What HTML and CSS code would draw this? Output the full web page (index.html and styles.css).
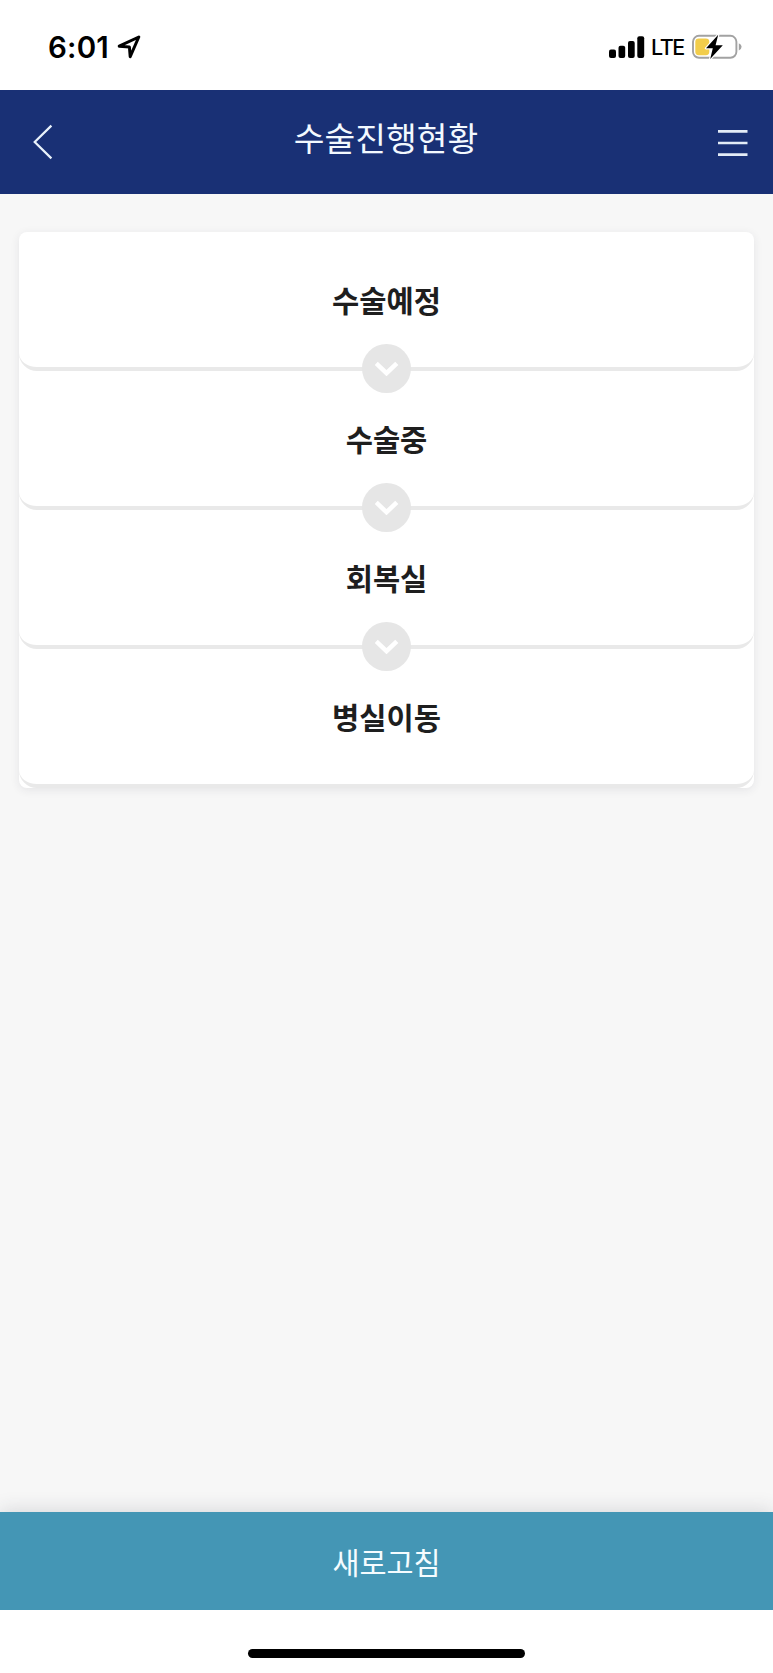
FILE: index.html
```html
<!DOCTYPE html>
<html lang="ko">
<head>
    <meta charset="UTF-8">
    <meta name="viewport" content="width=device-width, initial-scale=1.0">
    <title>수술진행현황</title>
    <link rel="stylesheet" href="styles.css">
</head>
<body>
    <div class="status-bar">
        <div class="status-left">
            <span class="time">6:01</span>
            <svg class="location" width="26" height="26" viewBox="0 0 26 26">
                <path d="M3.2 12.2 L22.8 3 L14.2 22.6 L13.4 13 Z" fill="none" stroke="#000" stroke-width="3" stroke-linejoin="round"/>
            </svg>
        </div>
        <div class="status-right">
            <svg class="signal" width="36" height="22" viewBox="0 0 36 22">
                <rect x="0" y="13.5" width="7" height="8.5" rx="2"/>
                <rect x="9.5" y="9.7" width="6.7" height="12.3" rx="2"/>
                <rect x="19" y="5" width="6.7" height="17" rx="2"/>
                <rect x="28.3" y="0.3" width="6.9" height="21.7" rx="2"/>
            </svg>
            <span class="network">LTE</span>
            <svg class="battery" width="50" height="26" viewBox="0 0 50 26">
                <rect x="1" y="1.8" width="43.4" height="22" rx="6" fill="none" stroke="#a2a2a2" stroke-width="1.9"/>
                <path d="M46.8 9.2 Q49.6 10.2 49.6 12.8 Q49.6 15.4 46.8 16.4 Z" fill="#a2a2a2"/>
                <rect x="3.3" y="4.4" width="14" height="16.8" rx="3.4" fill="#f2cd4b"/>
                <path d="M26.2 0.8 L14 14.2 H20.8 L18.2 25 L30.8 11.2 H23.6 Z" fill="#000" stroke="#fff" stroke-width="2.4" paint-order="stroke" stroke-linejoin="round"/>
            </svg>
        </div>
    </div>

    <header class="header">
        <svg class="back" width="20" height="36" viewBox="0 0 20 36">
            <path d="M18.4 1.6 L1.7 18 L18.4 34.4" fill="none" stroke="#e9f2fb" stroke-width="2.2"/>
        </svg>
        <h1>수술진행현황</h1>
        <svg class="menu" width="30" height="28" viewBox="0 0 30 28">
            <path d="M0 2.4 H29.5 M0 14 H29.5 M0 25.6 H29.5" stroke="#e3ecf7" stroke-width="2.6"/>
        </svg>
    </header>

    <main class="content">
        <ol class="steps">
            <li class="step">
                수술예정
                <span class="arrow"><svg width="24" height="16" viewBox="0 0 24 16"><path d="M1.2 3.4 L11.5 13.2 L21.8 3.4"/></svg></span>
            </li>
            <li class="step">
                수술중
                <span class="arrow"><svg width="24" height="16" viewBox="0 0 24 16"><path d="M1.2 3.4 L11.5 13.2 L21.8 3.4"/></svg></span>
            </li>
            <li class="step">
                회복실
                <span class="arrow"><svg width="24" height="16" viewBox="0 0 24 16"><path d="M1.2 3.4 L11.5 13.2 L21.8 3.4"/></svg></span>
            </li>
            <li class="step">병실이동</li>
        </ol>
    </main>

    <button class="refresh" type="button">새로고침</button>
    <div class="home-area">
        <div class="home-indicator"></div>
    </div>
</body>
</html>
```

FILE: styles.css
```css
* {
    box-sizing: border-box;
}
body {
    display: flex;
    flex-direction: column;
    height: 1673px;
    margin: 0;
    background-color: #f7f7f7;
    font-family: "Noto Sans CJK KR", sans-serif;
    color: #1e1e1e;
}

/* status bar */
.status-bar {
    display: flex;
    justify-content: space-between;
    height: 89.5px;
    padding: 33px 31px 0 48px;
    background-color: #fff;
    color: #000;
    font-family: Inter, sans-serif;
}
.status-left,
.status-right {
    display: flex;
    align-items: center;
    height: 27px;
}
.time {
    width: 61px;
    font-size: 29.5px;
    font-weight: 600;
    letter-spacing: 0.2px;
    white-space: nowrap;
}
.location {
    margin-left: 7px;
}
.network {
    width: 32px;
    margin: 1px 9px 0 6px;
    font-size: 21.5px;
    font-weight: 500;
    letter-spacing: -1.4px;
}

/* header */
.header {
    display: flex;
    align-items: center;
    justify-content: space-between;
    height: 104.5px;
    padding: 0 25px 0 33px;
    background-color: #193075;
}
.header h1 {
    margin: 0 0 9px 1px;
    color: #f3f9ff;
    font-size: 33.4px;
    font-weight: 400;
    line-height: 48px;
}
.menu {
    margin-top: 3px;
}

/* steps */
.content {
    flex: 1;
    padding: 37.5px 19px 0;
}
.steps {
    margin: 0;
    padding: 0;
    list-style: none;
    background-color: #fff;
    border-radius: 8px;
    box-shadow: 0 2px 10px rgba(40, 45, 70, 0.09);
}
.step {
    position: relative;
    display: flex;
    align-items: center;
    justify-content: center;
    height: 139.1px;
    border-bottom: 4px solid #e9e9e9;
    border-radius: 18px;
    font-size: 29.6px;
    font-weight: 700;
}
.arrow {
    position: absolute;
    left: 50%;
    bottom: -26px;
    z-index: 1;
    display: flex;
    align-items: center;
    justify-content: center;
    width: 49px;
    height: 49px;
    margin-left: -24.5px;
    border-radius: 50%;
    background-color: #e6e6e6;
}
.arrow path {
    fill: none;
    stroke: #fff;
    stroke-width: 4.5;
}

/* bottom */
.refresh {
    height: 97.5px;
    padding: 0;
    border: 0;
    background-color: #4496b5;
    box-shadow: 0 -2px 18px rgba(40, 45, 60, 0.15);
    color: #f5fcff;
    font-family: inherit;
    font-size: 29.4px;
    font-weight: 400;
}
.home-area {
    display: flex;
    justify-content: center;
    height: 63.5px;
    padding-top: 39px;
    background-color: #fff;
}
.home-indicator {
    width: 277px;
    height: 9.5px;
    border-radius: 5px;
    background-color: #000;
}
```
